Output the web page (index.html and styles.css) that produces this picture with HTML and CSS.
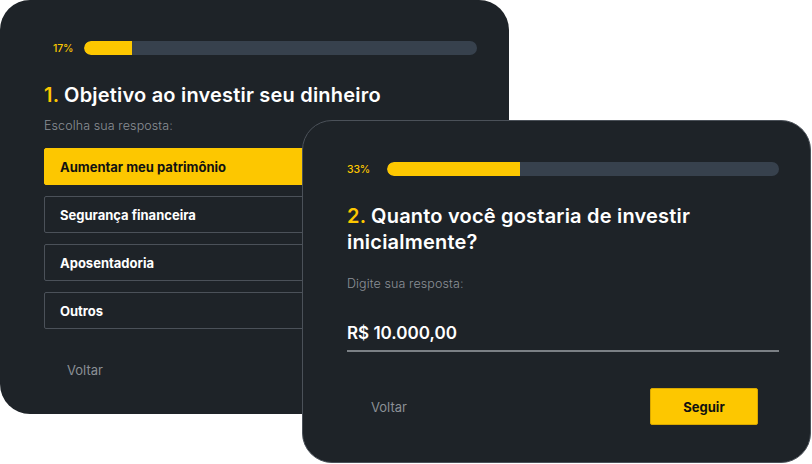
FILE: index.html
```html
<!DOCTYPE html>
<html lang="pt-BR">
<head>
<meta charset="utf-8">
<link rel="stylesheet" href="styles.css">
</head>
<body>
<div class="stage">
  <section class="card card-one">
    <div class="progress progress-one">
      <span class="pct">17%</span>
      <div class="track"><div class="fill" style="width:48px"></div></div>
    </div>
    <h2 class="title"><span class="num">1.</span> Objetivo ao investir seu dinheiro</h2>
    <p class="hint">Escolha sua resposta:</p>
    <ul class="options">
      <li class="option selected">Aumentar meu patrimônio</li>
      <li class="option">Segurança financeira</li>
      <li class="option">Aposentadoria</li>
      <li class="option">Outros</li>
    </ul>
    <div class="actions">
      <span class="back">Voltar</span>
    </div>
  </section>

  <section class="card card-two">
    <div class="progress">
      <span class="pct">33%</span>
      <div class="track"><div class="fill" style="width:133px"></div></div>
    </div>
    <h2 class="title"><span class="num">2.</span> Quanto você gostaria de investir inicialmente?</h2>
    <p class="hint hint-two">Digite sua resposta:</p>
    <div class="answer">R$ 10.000,00</div>
    <div class="actions actions-two">
      <span class="back">Voltar</span>
      <button class="next">Seguir</button>
    </div>
  </section>
</div>
</body>
</html>
```
FILE: styles.css
```css
* { box-sizing: border-box; }
html, body {
  margin: 0;
  background: #ffffff;
}
body {
  font-family: "Inter", "Liberation Sans", sans-serif;
  width: 812px;
  height: 464px;
  overflow: hidden;
}
.stage {
  position: relative;
  width: 812px;
  height: 464px;
}
.card {
  background: #1e2328;
  border-radius: 30px;
  color: #ffffff;
}
.card-one {
  width: 509px;
  height: 414px;
  padding: 41px 32px 0 44px;
}
.card-two {
  position: absolute;
  left: 302px;
  top: 120px;
  width: 509px;
  height: 343px;
  padding: 41px 31px 0 44px;
  border: 1px solid #4b5159;
}
.progress {
  display: flex;
  align-items: center;
  height: 14px;
}
.progress-one {
  padding-left: 9px;
}
.pct {
  color: #fdc700;
  font-size: 10.5px;
  font-weight: 500;
  width: 40px;
  letter-spacing: -0.2px;
}
.progress-one .pct { width: 31px; }
.track {
  flex: 1;
  height: 14px;
  border-radius: 7px;
  background: #37414d;
  overflow: hidden;
}
.fill {
  height: 100%;
  background: #fdc700;
  border-radius: 7px 0 0 7px;
}
.title {
  margin: 27px 0 0;
  font-family: "Inter", sans-serif;
  font-size: 20px;
  font-weight: 600;
  line-height: 26px;
  letter-spacing: 0.2px;
  color: #ffffff;
}
.num { color: #fdc700; }
.hint {
  margin: 10px 0 0;
  font-family: "Inter", sans-serif;
  font-size: 12.5px;
  font-weight: 300;
  color: #8b9096;
  letter-spacing: 0.1px;
  line-height: 16px;
}
.hint-two {
  margin-top: 21px;
}
.options {
  list-style: none;
  margin: 14px 0 0;
  padding: 0;
  display: flex;
  flex-direction: column;
  gap: 11px;
}
.option {
  height: 37px;
  display: flex;
  align-items: center;
  padding-left: 15px;
  border: 1px solid #4b5159;
  border-radius: 2px;
  font-size: 13px;
  font-weight: 700;
  color: #ffffff;
}
.option.selected {
  background: #fdc700;
  border-color: #fdc700;
  color: #111111;
}
.actions {
  display: flex;
  align-items: center;
  justify-content: space-between;
  margin-top: 33px;
  padding-left: 23px;
}
.back {
  font-size: 13px;
  color: #8b9096;
}
.answer {
  margin-top: 29px;
  padding-bottom: 5px;
  border-bottom: 2px solid #7b8085;
  font-size: 17px;
  font-weight: 600;
  line-height: 24px;
}
.actions-two {
  margin-top: 36px;
  padding-left: 24px;
  padding-right: 21px;
}
.next {
  width: 108px;
  height: 37px;
  background: #fdc700;
  border: 1px solid #d9a800;
  border-radius: 2px;
  font-family: "Inter", sans-serif;
  font-size: 13px;
  font-weight: 700;
  color: #111111;
}
```
